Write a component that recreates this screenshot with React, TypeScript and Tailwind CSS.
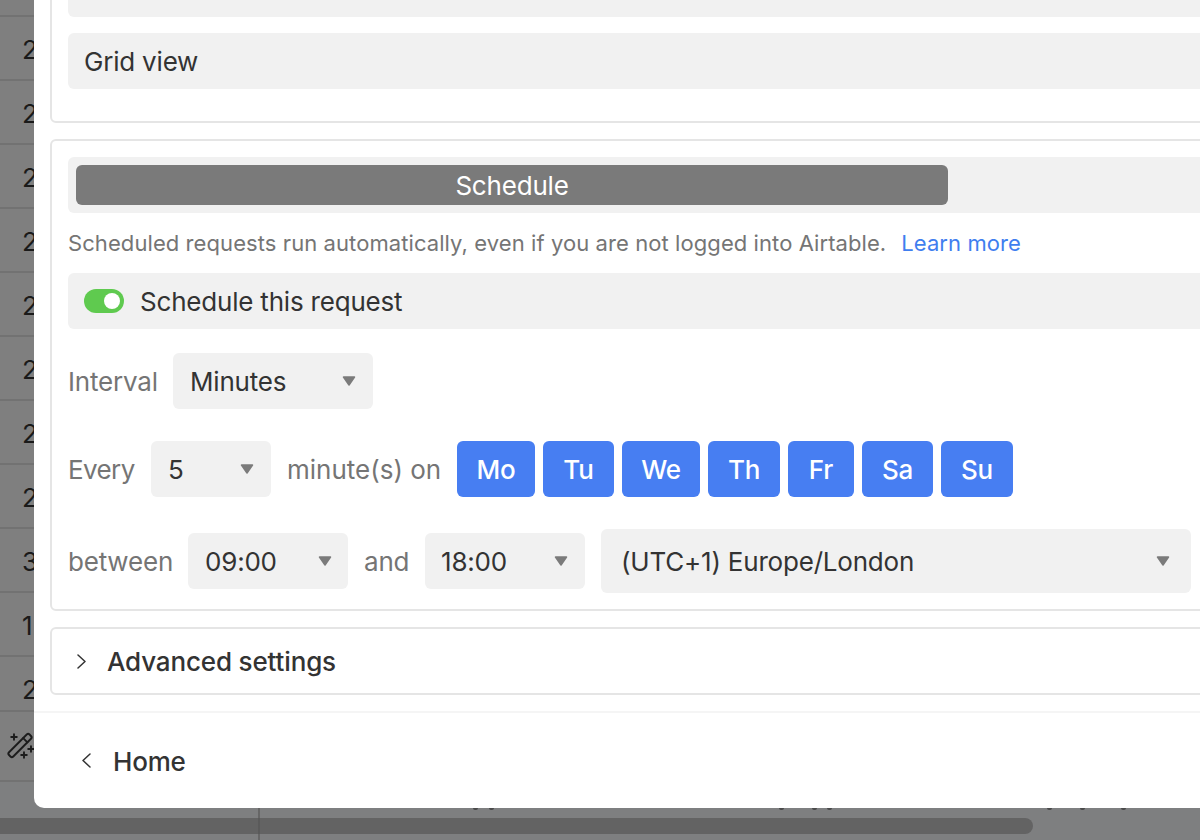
import React from 'react';

const digits = ['2', '2', '2', '2', '2', '2', '2', '2', '3', '1', '2'];
const days = [
  { name: 'Mo', width: 'w-[78px]' },
  { name: 'Tu', width: 'w-[71px]' },
  { name: 'We', width: 'w-[78px]' },
  { name: 'Th', width: 'w-[72px]' },
  { name: 'Fr', width: 'w-[66px]' },
  { name: 'Sa', width: 'w-[71px]' },
  { name: 'Su', width: 'w-[72px]' },
];
const clippedMarks = [473, 489, 779, 812, 827, 1047, 1080, 1121];

const Caret = () => (
  <svg width="14" height="10" viewBox="0 0 14 10" className="shrink-0">
    <path d="M1.5 1h11L7 9z" fill="#7b7b7b" stroke="#7b7b7b" strokeWidth="1.5" strokeLinejoin="round" />
  </svg>
);

const Txt = ({ children }: { children: React.ReactNode }) => <span className="pt-[2px]">{children}</span>;

const Select = ({ label, className }: { label: string; className: string }) => (
  <div className={`flex items-center justify-between rounded-md bg-[#f1f1f1] text-[#333333] ${className}`}>
    <Txt>{label}</Txt>
    <Caret />
  </div>
);

const Label = ({ children, className }: { children: React.ReactNode; className: string }) => (
  <span className={`whitespace-nowrap pt-[2px] text-[#757575] ${className}`}>{children}</span>
);

const Bar = ({ children, className = '' }: { children?: React.ReactNode; className?: string }) => (
  <div className={`flex h-14 shrink-0 items-center rounded-md bg-[#f1f1f1] ${className}`}>{children}</div>
);

const Wand = () => (
  <svg width="28" height="28" viewBox="0 0 28 28" fill="none" stroke="#1c1c1c" strokeWidth="1.9" strokeLinecap="round" className="overflow-visible">
    <g transform="translate(19 14.5) rotate(-45)">
      <rect x="-14.5" y="-3" width="29" height="6" rx="2" />
      <path d="M7.5-3v6" />
    </g>
    <path d="M13 3.2v5.6M10.2 6h5.6M30 15.2v5.6M27.2 18h5.6M23 21.2v5.6M20.2 24h5.6" />
  </svg>
);

export default function App() {
  return (
    <div className="relative h-[840px] w-[1200px] overflow-hidden bg-[#7e7f80] font-['Inter',sans-serif]">
      {/* dimmed grid behind the dialog */}
      <div className="flex flex-col bg-[#7f7f7f] text-[26px] leading-[26px] text-[#1a1a1a]">
        <div className="h-[17px] border-b-2 border-[#727272]" />
        {digits.map((d, i) => (
          <div
            key={i}
            className={`border-b-2 border-[#727272] pl-[22px] pt-5 ${i === digits.length - 1 ? 'h-[55px]' : 'h-16'}`}
          >
            {d}
          </div>
        ))}
        <div className="h-[70px] border-b-2 border-[#727272] pl-[1px] pt-[19px]">
          <Wand />
        </div>
      </div>

      {clippedMarks.map((x) => (
        <div key={x} className="absolute top-[808px] h-[2px] w-[5px] rounded-b-full bg-[#4a4a4a]" style={{ left: x }} />
      ))}
      <div className="absolute left-[258px] top-[781px] h-[59px] w-[2px] bg-[#666666]" />
      <div className="absolute left-0 top-[818px] h-4 w-[1033px] rounded-r-lg bg-[#636363]" />
      <div className="absolute left-[258px] top-[818px] h-4 w-[2px] bg-[#5a5a5a]" />

      {/* dialog */}
      <div className="absolute left-[34px] top-0 flex h-[808px] w-[1300px] flex-col justify-end overflow-hidden rounded-bl-[10px] bg-white text-[26px] leading-8 tracking-[-0.2px] text-[#333333]">
        <div className="flex shrink-0 flex-col gap-4 px-4">
          <div className="flex shrink-0 flex-col gap-4 rounded-md border-2 border-[#e5e5e5] px-4 pb-8 pt-4">
            <Bar />
            <Bar className="px-4">
              <Txt>Grid view</Txt>
            </Bar>
          </div>

          <div className="flex shrink-0 flex-col rounded-md border-2 border-[#e5e5e5] p-4">
            <Bar className="px-2">
              <div className="flex h-10 w-[872px] items-center justify-center rounded-md bg-[#7a7a7a] text-white">
                <Txt>Schedule</Txt>
              </div>
            </Bar>
            <p className="mt-[14px] flex h-8 items-center gap-[15px] text-[22px] tracking-[0.08px] text-[#757575]">
              <span>Scheduled requests run automatically, even if you are not logged into Airtable.</span>
              <span className="text-[#3f7eef]">Learn more</span>
            </p>
            <Bar className="mt-[14px] gap-4 px-4">
              <div className="flex h-6 w-10 items-center justify-end rounded-full bg-[#5fca4f] pr-1">
                <div className="h-4 w-4 rounded-full bg-white" />
              </div>
              <Txt>Schedule this request</Txt>
            </Bar>

            <div className="mt-6 flex items-center gap-4">
              <Label className="w-[89px]">Interval</Label>
              <Select label="Minutes" className="h-14 w-[200px] pl-[17px] pr-[17px]" />
            </div>

            <div className="mt-8 flex items-center gap-4">
              <Label className="w-[67px] tracking-[-0.6px]">Every</Label>
              <Select label="5" className="h-14 w-[120px] pl-[17px] pr-[17px]" />
              <Label className="w-[154px] tracking-normal">minute(s) on</Label>
              <div className="flex gap-2">
                {days.map((d) => (
                  <div key={d.name} className={`flex h-14 items-center justify-center rounded-md bg-[#477ef2] font-medium text-white ${d.width}`}>
                    <Txt>{d.name}</Txt>
                  </div>
                ))}
              </div>
            </div>

            <div className="mt-8 flex items-center gap-4">
              <Label className="w-[104px]">between</Label>
              <Select label="09:00" className="h-14 w-40 pl-[17px] pr-4" />
              <Label className="w-[45px]">and</Label>
              <Select label="18:00" className="h-14 w-40 pl-4 pr-[17px]" />
              <Select label="(UTC+1) Europe/London" className="h-16 w-[590px] pl-5 pr-[21px]" />
            </div>
          </div>

          <div className="flex h-[68px] shrink-0 items-center gap-[21px] rounded-md border-2 border-[#e5e5e5] pl-[25px] font-medium tracking-[-0.15px]">
            <svg width="9" height="15" viewBox="0 0 9 15" fill="none" stroke="#333333" strokeWidth="1.5" strokeLinecap="round" strokeLinejoin="round">
              <path d="M1 1l7 6.5L1 14" />
            </svg>
            <Txt>Advanced settings</Txt>
          </div>
        </div>

        <div className="mt-4 flex h-[97px] shrink-0 items-center gap-[22px] border-t-2 border-[#f5f5f5] pl-12 font-medium">
          <svg width="9" height="15" viewBox="0 0 9 15" fill="none" stroke="#333333" strokeWidth="1.5" strokeLinecap="round" strokeLinejoin="round">
            <path d="M8 1L1 7.5 8 14" />
          </svg>
          <Txt>Home</Txt>
        </div>
      </div>
    </div>
  );
}
